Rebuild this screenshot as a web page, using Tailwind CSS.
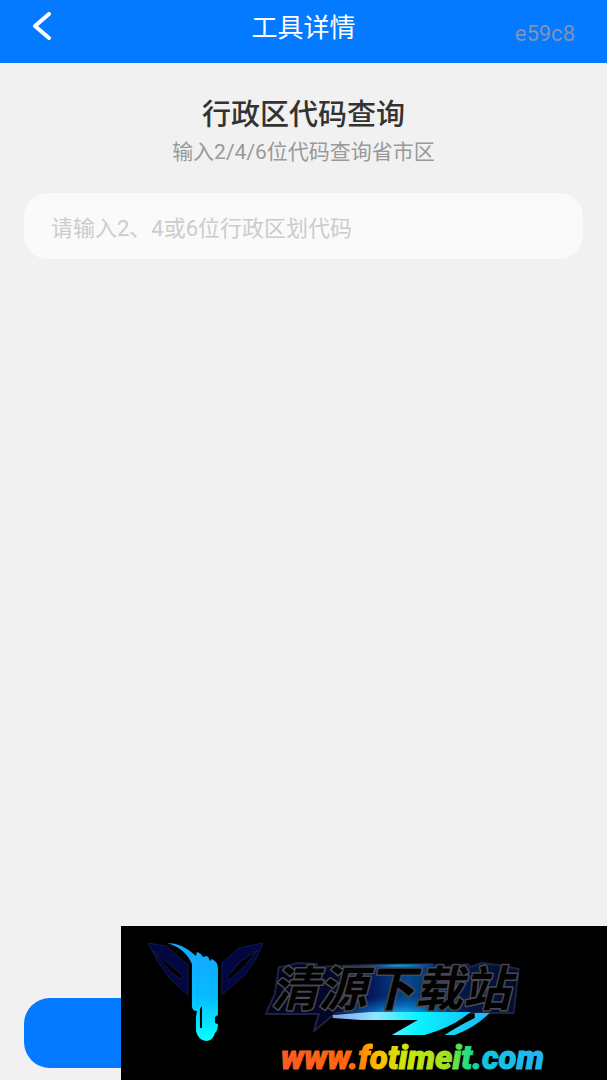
<!doctype html>
<html lang="zh-CN">
  <head>
    <meta charset="UTF-8">
    <meta name="viewport" content="width=device-width, initial-scale=1.0">
    <title>工具详情</title>
    <script src="https://cdn.jsdelivr.net/npm/@tailwindcss/browser@4"></script>
  </head>
  <body class="relative flex min-h-screen flex-col bg-[#f1f1f1] font-[Roboto,'Noto_Sans_CJK_SC',sans-serif]">
    <header class="grid h-[63px] grid-cols-3 items-start bg-[#037aff] px-8 text-white">
      <a href="#" aria-label="返回" class="mt-2 w-9 py-1">
        <svg class="h-7 w-5" viewBox="0 0 20 28" fill="none" stroke="currentColor" stroke-width="4" stroke-linecap="round" stroke-linejoin="round">
          <path d="M17 2 3 14l14 12" />
        </svg>
      </a>
      <h1 class="mt-2.5 text-center text-[26px] leading-9 whitespace-nowrap">工具详情</h1>
      <span class="mt-5 text-right text-[22px] leading-7 text-[#8492b4]">e59c8</span>
    </header>

    <main class="flex flex-1 flex-col px-6 pt-8 pb-3">
      <h2 class="text-center text-[29px] leading-10 font-medium text-[#333]">行政区代码查询</h2>
      <p class="text-center text-[21px] leading-[34px] text-[#999]">输入2/4/6位代码查询省市区</p>

      <input
        type="text"
        aria-label="行政区划代码"
        placeholder="请输入2、4或6位行政区划代码"
        class="mt-6 h-[66px] w-full rounded-3xl bg-[#fafafa] px-[27px] pt-1 text-[22px] text-[#333] placeholder:text-[#ccc] focus:outline-none"
      >

      <button type="button" aria-label="查询" class="mt-auto h-[70px] w-full rounded-[26px] bg-[#037aff]"></button>
    </main>

    <!-- 站点水印 -->
    <div class="absolute right-0 bottom-0 w-4/5 bg-black">
      <svg class="block w-full" viewBox="0 0 486 154">
        <defs>
          <linearGradient id="feather" x1="0" y1="0" x2="0" y2="1">
            <stop offset="0" stop-color="#16a4ff" />
            <stop offset=".55" stop-color="#06bdff" />
            <stop offset="1" stop-color="#08ffff" />
          </linearGradient>
          <linearGradient id="plate" x1="0" y1="0" x2="1" y2="0">
            <stop offset="0" stop-color="#02031b" />
            <stop offset=".28" stop-color="#030828" />
            <stop offset=".42" stop-color="#041a5c" />
            <stop offset=".56" stop-color="#07498c" />
            <stop offset=".74" stop-color="#03194e" />
            <stop offset="1" stop-color="#020c2c" />
          </linearGradient>
          <linearGradient id="swoosh" gradientUnits="userSpaceOnUse" x1="205" y1="0" x2="372" y2="0">
            <stop offset="0" stop-color="#7f92e8" />
            <stop offset=".3" stop-color="#8de9ff" />
            <stop offset=".55" stop-color="#06f4ff" />
            <stop offset="1" stop-color="#1fb4f4" />
          </linearGradient>
          <radialGradient id="glow">
            <stop offset="0" stop-color="#14c4ff" />
            <stop offset="1" stop-color="#0870e0" stop-opacity="0" />
          </radialGradient>
          <linearGradient id="rainbow" gradientUnits="userSpaceOnUse" x1="161" y1="0" x2="425" y2="0">
            <stop offset="0" stop-color="#ff5a22" />
            <stop offset=".27" stop-color="#ff6a0c" />
            <stop offset=".36" stop-color="#ffba00" />
            <stop offset=".46" stop-color="#d0e50c" />
            <stop offset=".62" stop-color="#a4e21c" />
            <stop offset=".7" stop-color="#28df78" />
            <stop offset=".76" stop-color="#12c5dc" />
            <stop offset="1" stop-color="#20b5fa" />
          </linearGradient>
          <clipPath id="plate-edge">
            <path d="M158 41 166 40 177 37 196 38V41L240 39 310 38 325 41 347 38 350 41 361 37 377 39 398 43 393 87H197L198 88 145 88 154 68Z" />
          </clipPath>
        </defs>

        <!-- 翅膀 -->
        <g fill="#020741" stroke="#121a48" stroke-width="1" fill-rule="evenodd">
          <path d="M27 17 45 20 67 39V69L50 54 37 36ZM31 24 50 46 61 54V49Z" />
          <path d="M142 17 118 22 101 37V69L124 49 135 33ZM137 24 119 36 107 50V55L120 44Z" />
        </g>
        <path fill="url(#feather)" d="M46 17Q62 17 75 30L76 26Q80 27 82 31L86 30Q88 31 89 35L91 33Q97 36 97 42V89L94 91V97L97 98Q97 105 94 107Q92 115 85 115Q77 114 75 105V91L76 85Q71 85 71 80V38Q64 22 46 17Z" />
        <path fill="none" stroke="#0797e8" stroke-opacity=".3" d="M77 36V80M91 42V80" />
        <path d="M79 83 81 80V102H79Z" />

        <!-- 底板 -->
        <path fill="url(#plate)" stroke="#1d2340" stroke-width="2" stroke-linejoin="round" d="M158 41 166 40 177 37 196 38V41L240 39 310 38 325 41 347 38 350 41 361 37 377 39 398 43 393 87H215L193 105 198 88H145L154 68Z" />
        <g clip-path="url(#plate-edge)">
          <ellipse cx="277" cy="38" rx="42" ry="7" fill="url(#glow)" />
          <ellipse cx="280" cy="90" rx="70" ry="20" fill="url(#glow)" />
        </g>
        <path fill="url(#swoosh)" d="M212 89 250 86H350L342 92Q328 102 304 109H271L297 94H240L212 92Z" />
        <path fill="url(#swoosh)" d="M354 87H369Q354 102 334 109H324Q334 102 354 92Z" />
        <text x="150" y="80" font-size="48" font-weight="700" font-style="italic" fill="#020202" stroke="#484a52" stroke-width="3" stroke-linejoin="round" paint-order="stroke" font-family="'Noto Sans CJK SC', sans-serif">清源下载站</text>
        <text x="160" y="143" font-size="33" font-weight="900" font-style="italic" fill="url(#rainbow)" stroke="url(#rainbow)" stroke-width="1" font-family="Roboto, 'Liberation Sans', sans-serif">www.fotimeit.com</text>
      </svg>
    </div>
  </body>
</html>
